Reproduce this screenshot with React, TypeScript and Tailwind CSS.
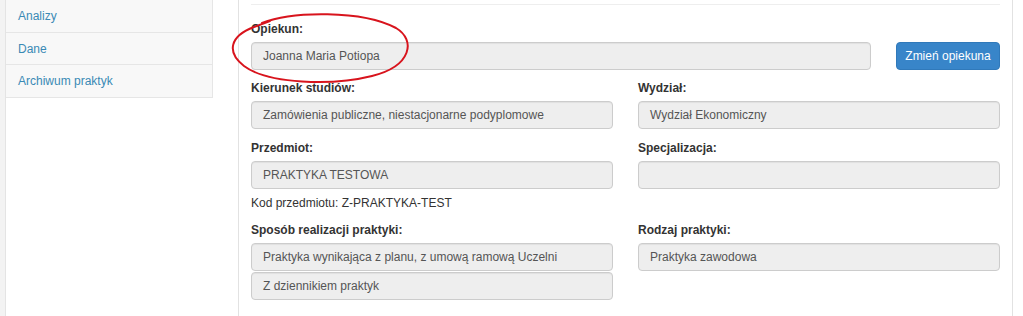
const menu = [
  { label: "Analizy", h: "h-[33px]" },
  { label: "Dane", h: "h-[32px]" },
  { label: "Archiwum praktyk", h: "h-[33px]" },
];

const Field = ({ value, className = "" }: { value?: string; className?: string }) => (
  <div
    className={`h-[28px] flex items-center px-[11px] bg-[#eeeeee] border border-[#cccccc] rounded-[4px] text-[12px] text-[#555555] shadow-[inset_0_1px_1px_rgba(0,0,0,0.06)] ${className}`}
  >
    {value}
  </div>
);

const Label = ({ children }: { children: string }) => (
  <div className="h-[17px] leading-[17px] mb-[4px] text-[12px] font-bold text-[#333333]">
    {children}
  </div>
);

export default function App() {
  return (
    <div
      className="relative flex h-[316px] w-[1023px] overflow-hidden bg-white"
      style={{ fontFamily: '"Liberation Sans", Arial, sans-serif' }}
    >
      {/* lewy pasek */}
      <div className="w-[6px] shrink-0 bg-[#f3f3f3] border-r border-[#e4e4e4]" />

      {/* menu boczne */}
      <div className="w-[207px] shrink-0">
        {menu.map((m) => (
          <div
            key={m.label}
            className={`${m.h} flex items-center pl-[12px] bg-[#f8f8f8] border-b border-r border-[#e6e6e6] text-[12px] text-[#3a8ab5]`}
          >
            {m.label}
          </div>
        ))}
      </div>

      <div className="w-[25px] shrink-0" />

      {/* panel główny */}
      <div className="w-[775px] shrink-0 border-l border-r border-[#e2e2e2] px-[12px]">
        <div className="mt-[4px] border-t border-[#eeeeee]" />

        <div className="mt-[16px]">
          <Label>Opiekun:</Label>
          <div className="flex gap-[25px]">
            <Field value="Joanna Maria Potiopa" className="flex-1" />
            <button className="h-[28px] w-[104px] rounded-[4px] bg-[#3885c9] border border-[#3079ba] text-[12px] text-white">
              Zmień opiekuna
            </button>
          </div>
        </div>

        <div className="grid grid-cols-2 gap-x-[25px]">
          <div className="mt-[10px]">
            <Label>Kierunek studiów:</Label>
            <Field value="Zamówienia publiczne, niestacjonarne podyplomowe" />
          </div>
          <div className="mt-[10px]">
            <Label>Wydział:</Label>
            <Field value="Wydział Ekonomiczny" />
          </div>

          <div className="mt-[11px]">
            <Label>Przedmiot:</Label>
            <Field value="PRAKTYKA TESTOWA" />
            <div className="mt-[6px] h-[17px] leading-[17px] text-[12px] text-[#333333]">
              Kod przedmiotu: Z-PRAKTYKA-TEST
            </div>
          </div>
          <div className="mt-[11px]">
            <Label>Specjalizacja:</Label>
            <Field />
          </div>

          <div className="mt-[10px]">
            <Label>Sposób realizacji praktyki:</Label>
            <Field value="Praktyka wynikająca z planu, z umową ramową Uczelni" />
            <Field value="Z dziennikiem praktyk" className="mt-[1px]" />
          </div>
          <div className="mt-[10px]">
            <Label>Rodzaj praktyki:</Label>
            <Field value="Praktyka zawodowa" />
          </div>
        </div>
      </div>

      {/* odręczne zaznaczenie */}
      <svg
        className="absolute left-0 top-0 pointer-events-none"
        width="1023"
        height="316"
        viewBox="0 0 1023 316"
      >
        <path
          d="M262 23 C292 11 362 10 396 28 C416 40 412 66 372 76 C332 86 268 84 244 66 C226 52 230 36 254 27 L270 21"
          fill="none"
          stroke="#d8141d"
          strokeWidth="2"
          strokeLinecap="round"
        />
      </svg>
    </div>
  );
}
